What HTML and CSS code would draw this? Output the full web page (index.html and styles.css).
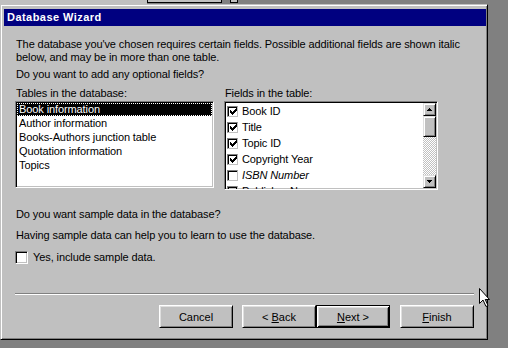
FILE: index.html
```html
<!DOCTYPE html>
<html lang="en">
<head>
    <meta charset="UTF-8">
    <meta name="viewport" content="width=device-width, initial-scale=1.0">
    <title>Database Wizard</title>
    <link rel="stylesheet" href="styles.css">
</head>
<body>
    <!-- Check mark used by the list checkboxes -->
    <svg class="defs" width="0" height="0">
        <symbol id="tick" viewBox="0 0 7 7">
            <path d="M6 0h1v3H6zM5 1h1v3H5zM4 2h1v3H4zM3 3h1v3H3zM2 4h1v3H2zM1 3h1v3H1zM0 2h1v3H0z"/>
        </symbol>
    </svg>

    <!-- Edge of the Access window behind the dialog -->
    <div class="behind">
        <div class="behind-face"></div>
        <div class="behind-tool"></div>
        <div class="behind-tool small"></div>
    </div>

    <!-- Wizard window -->
    <div class="window">
        <div class="title-bar">Database Wizard</div>

        <div class="dialog-body">
            <p class="intro">The database you've chosen requires certain fields. Possible additional fields are shown italic<br>below, and may be in more than one table.</p>
            <p class="question">Do you want to add any optional fields?</p>

            <div class="lists">
                <div class="list-col">
                    <div class="list-label">Tables in the database:</div>
                    <ul class="listbox tables">
                        <li class="selected">Book information</li>
                        <li>Author information</li>
                        <li>Books-Authors junction table</li>
                        <li>Quotation information</li>
                        <li>Topics</li>
                    </ul>
                </div>

                <div class="list-col">
                    <div class="list-label">Fields in the table:</div>
                    <div class="listbox fields">
                        <ul class="field-items">
                            <li><span class="check"><svg><use href="#tick"/></svg></span>Book ID</li>
                            <li><span class="check"><svg><use href="#tick"/></svg></span>Title</li>
                            <li><span class="check"><svg><use href="#tick"/></svg></span>Topic ID</li>
                            <li><span class="check"><svg><use href="#tick"/></svg></span>Copyright Year</li>
                            <li class="optional"><span class="check"></span>ISBN Number</li>
                            <li><span class="check"><svg><use href="#tick"/></svg></span>Publisher Name</li>
                        </ul>
                        <div class="scrollbar">
                            <div class="scroll-btn">
                                <svg width="5" height="3" viewBox="0 0 5 3"><path d="M2 0h1v1H2zM1 1h3v1H1zM0 2h5v1H0z"/></svg>
                            </div>
                            <div class="scroll-thumb"></div>
                            <div class="scroll-track"></div>
                            <div class="scroll-btn">
                                <svg width="5" height="3" viewBox="0 0 5 3"><path d="M0 0h5v1H0zM1 1h3v1H1zM2 2h1v1H2z"/></svg>
                            </div>
                        </div>
                    </div>
                </div>
            </div>

            <p class="question sample">Do you want sample data in the database?</p>
            <p class="note">Having sample data can help you to learn to use the database.</p>
            <div class="option"><span class="checkbox"></span>Yes, include sample data.</div>

            <div class="separator"></div>

            <div class="buttons">
                <button class="cancel">Cancel</button>
                <button>&lt; <u>B</u>ack</button>
                <button class="default"><u>N</u>ext &gt;</button>
                <button class="finish"><u>F</u>inish</button>
            </div>
        </div>
    </div>

    <!-- Mouse pointer -->
    <svg class="cursor" width="12" height="20" viewBox="0 0 12 20">
        <polygon points="0.5,0.5 0.5,15.5 4,12 7,18.5 9,17.5 6.2,11.5 10.5,11.5" fill="#fff" stroke="#000" stroke-width="1"/>
    </svg>
</body>
</html>
```

FILE: styles.css
```css
/* Page */
body {
    margin: 0;
    width: 508px;
    height: 348px;
    overflow: hidden;
    position: relative;
    background: #808080;
    font-family: "Liberation Sans", Arial, sans-serif;
    font-size: 11px;
    color: #000;
}

.defs {
    position: absolute;
}

/* Window behind */
.behind {
    display: flex;
    height: 4px;
}

.behind-face {
    width: 147px;
    background: #c0c0c0;
}

.behind-tool {
    width: 73px;
    height: 2px;
    background: #c0c0c0;
    border: 1px solid #000;
    border-top: none;
}

.behind-tool.small {
    width: 6px;
    margin-left: 8px;
}

/* Window */
.window {
    width: 488px;
    height: 336px;
    box-sizing: border-box;
    background: #c0c0c0;
    border: 1px solid;
    border-color: #c0c0c0 #000 #000 #c0c0c0;
    box-shadow: inset 1px 1px #fff, inset -1px -1px #808080;
    padding: 4px 1px 1px 3px;
}

.title-bar {
    height: 17px;
    line-height: 17px;
    padding-left: 3px;
    background: #000080;
    color: #fff;
    font-weight: bold;
    letter-spacing: 0.45px;
}

.dialog-body {
    padding: 12px 12px 0 12px;
    letter-spacing: -0.1px;
}

.dialog-body p {
    margin: 0;
    line-height: 13px;
    white-space: nowrap;
}

.question {
    margin-top: 4px !important;
}

/* Lists */
.lists {
    display: grid;
    grid-template-columns: 199px 214px;
    column-gap: 10px;
    align-items: start;
    margin: 6px 0 0 -1px;
}

.list-label {
    line-height: 13px;
    margin: 0 0 1px 1px;
}

.listbox {
    box-sizing: border-box;
    margin: 0;
    padding: 1px;
    list-style: none;
    background: #fff;
    border: 1px solid;
    border-color: #808080 #fff #fff #808080;
    box-shadow: inset 1px 1px #000, inset -1px -1px #c0c0c0;
}

.tables {
    height: 87px;
}

.tables li {
    height: 13px;
    line-height: 13px;
    margin-bottom: 1px;
    padding-left: 2px;
    white-space: nowrap;
}

.tables li.selected {
    background: #000;
    color: #fff;
    outline: 1px dotted #fff;
    outline-offset: -1px;
}

.fields {
    height: 89px;
    display: flex;
    overflow: hidden;
}

.field-items {
    flex: 1;
    margin: 0;
    padding: 0 0 0 1px;
    list-style: none;
}

.field-items li {
    height: 16px;
    line-height: 16px;
    display: flex;
    align-items: center;
    gap: 4px;
    white-space: nowrap;
}

.field-items li.optional {
    font-style: italic;
}

.check {
    width: 11px;
    height: 11px;
    box-sizing: border-box;
    border: 1px solid;
    border-color: #808080 #c0c0c0 #c0c0c0 #808080;
    box-shadow: inset 1px 1px #000;
    display: flex;
    align-items: center;
    justify-content: center;
    flex: none;
}

.check svg {
    width: 7px;
    height: 7px;
    margin: 1px 0 0 1px;
}

/* Scrollbar */
.scrollbar {
    width: 13px;
    flex: none;
    display: flex;
    flex-direction: column;
}

.scroll-btn,
.scroll-thumb {
    box-sizing: border-box;
    background: #c0c0c0;
    border: 1px solid;
    border-color: #dfdfdf #000 #000 #dfdfdf;
    box-shadow: inset 1px 1px #fff, inset -1px -1px #808080;
}

.scroll-btn {
    height: 13px;
    display: flex;
    align-items: center;
    justify-content: center;
}

.scroll-thumb {
    height: 21px;
}

.scroll-track {
    flex: 1;
    background: repeating-conic-gradient(#c0c0c0 0 25%, #fff 0 50%) 0 0 / 2px 2px;
}

/* Sample data */
.sample {
    margin-top: 18px !important;
}

.note {
    margin-top: 8px !important;
}

.option {
    display: flex;
    align-items: center;
    gap: 5px;
    height: 13px;
    line-height: 13px;
    margin: 9px 0 0 -1px;
}

.checkbox {
    width: 13px;
    height: 13px;
    box-sizing: border-box;
    background: #fff;
    border: 1px solid;
    border-color: #808080 #fff #fff #808080;
    box-shadow: inset 1px 1px #000, inset -1px -1px #c0c0c0;
}

.separator {
    margin: 29px 0 0 -1px;
    border-top: 1px solid #808080;
    border-bottom: 1px solid #fff;
}

/* Buttons */
.buttons {
    display: flex;
    justify-content: flex-end;
    margin-top: 10px;
}

button {
    width: 74px;
    height: 23px;
    box-sizing: border-box;
    padding: 0;
    font: inherit;
    color: #000;
    background: #c0c0c0;
    border: 1px solid;
    border-color: #fff #000 #000 #fff;
    box-shadow: inset 1px 1px #dfdfdf, inset -1px -1px #808080;
}

.cancel {
    margin-right: 9px;
}

button.default {
    border-color: #000;
    box-shadow: inset 1px 1px #fff, inset -1px -1px #000, inset 2px 2px #dfdfdf, inset -2px -2px #808080;
}

.finish {
    margin-left: 10px;
}

/* Mouse pointer */
.cursor {
    position: absolute;
    left: 479px;
    top: 288px;
}
```
